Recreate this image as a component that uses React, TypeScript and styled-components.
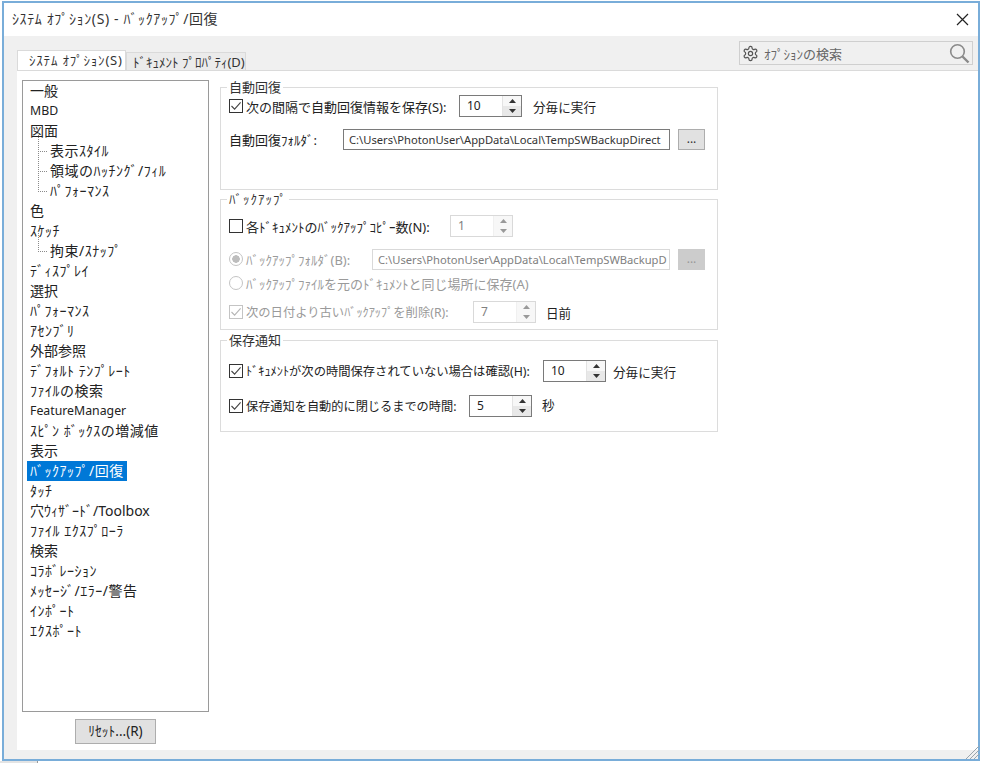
import React from "react";
import styled, { createGlobalStyle } from "styled-components";

const items: { label: string; child?: boolean; selected?: boolean; latin?: boolean; tight?: boolean }[] = [
  { label: "一般" },
  { label: "MBD", latin: true },
  { label: "図面" },
  { label: "表示ｽﾀｲﾙ", child: true },
  { label: "領域のﾊｯﾁﾝｸﾞ/ﾌｨﾙ", child: true },
  { label: "ﾊﾟﾌｫｰﾏﾝｽ", child: true },
  { label: "色" },
  { label: "ｽｹｯﾁ" },
  { label: "拘束/ｽﾅｯﾌﾟ", child: true },
  { label: "ﾃﾞｨｽﾌﾟﾚｲ" },
  { label: "選択" },
  { label: "ﾊﾟﾌｫｰﾏﾝｽ" },
  { label: "ｱｾﾝﾌﾞﾘ" },
  { label: "外部参照" },
  { label: "ﾃﾞﾌｫﾙﾄ ﾃﾝﾌﾟﾚｰﾄ" },
  { label: "ﾌｧｲﾙの検索" },
  { label: "FeatureManager", latin: true },
  { label: "ｽﾋﾟﾝ ﾎﾞｯｸｽの増減値" },
  { label: "表示" },
  { label: "ﾊﾞｯｸｱｯﾌﾟ/回復", selected: true },
  { label: "ﾀｯﾁ" },
  { label: "穴ｳｨｻﾞｰﾄﾞ/Toolbox", tight: true },
  { label: "ﾌｧｲﾙ ｴｸｽﾌﾟﾛｰﾗ" },
  { label: "検索" },
  { label: "ｺﾗﾎﾞﾚｰｼｮﾝ" },
  { label: "ﾒｯｾｰｼﾞ/ｴﾗｰ/警告" },
  { label: "ｲﾝﾎﾟｰﾄ" },
  { label: "ｴｸｽﾎﾟｰﾄ" },
];

const hasKana = (text: string) => /[\uff61-\uff9f]/.test(text);

const Check = ({ checked, disabled }: { checked?: boolean; disabled?: boolean }) => (
  <CheckBox $disabled={disabled}>
    {checked && (
      <svg width="12" height="12" viewBox="0 0 12 12">
        <path d="M1.5 6 L4.6 9.2 L10.6 2.4" fill="none" stroke={disabled ? "#b5b5b5" : "#444"} strokeWidth="1.1" />
      </svg>
    )}
  </CheckBox>
);

const Spin = ({ value, disabled }: { value: string; disabled?: boolean }) => (
  <SpinBox $disabled={disabled}>
    <SpinValue>{value}</SpinValue>
    <SpinArrows $disabled={disabled}>
      <SpinStep $disabled={disabled}>
        <svg width="7" height="4" viewBox="0 0 7 4">
          <path d="M3.5 0 L7 4 L0 4 Z" fill={disabled ? "#999" : "#333"} />
        </svg>
      </SpinStep>
      <SpinStep $disabled={disabled} $down>
        <svg width="7" height="4" viewBox="0 0 7 4">
          <path d="M0 0 L7 0 L3.5 4 Z" fill={disabled ? "#999" : "#333"} />
        </svg>
      </SpinStep>
    </SpinArrows>
  </SpinBox>
);

export default function App() {
  return (
    <>
      <GlobalStyle />
      <Window>
        <TitleBar>
          <Title>ｼｽﾃﾑ ｵﾌﾟｼｮﾝ(S) - ﾊﾞｯｸｱｯﾌﾟ/回復</Title>
          <svg width="13" height="13" viewBox="0 0 13 13">
            <path d="M1 1 L12 12 M12 1 L1 12" stroke="#222" strokeWidth="1.2" />
          </svg>
        </TitleBar>
        <Body>
          <TabBar>
            <Tabs>
              <Tab $active>ｼｽﾃﾑ ｵﾌﾟｼｮﾝ(S)</Tab>
              <Tab>ﾄﾞｷｭﾒﾝﾄ ﾌﾟﾛﾊﾟﾃｨ(D)</Tab>
            </Tabs>
            <SearchBox>
              <svg width="17" height="17" viewBox="0 0 24 24" fill="none" stroke="#555" strokeWidth="1.7">
                <path d="M12.22 2h-.44a2 2 0 0 0-2 2v.18a2 2 0 0 1-1 1.73l-.43.25a2 2 0 0 1-2 0l-.15-.08a2 2 0 0 0-2.73.73l-.22.38a2 2 0 0 0 .73 2.73l.15.1a2 2 0 0 1 1 1.72v.51a2 2 0 0 1-1 1.74l-.15.09a2 2 0 0 0-.73 2.73l.22.38a2 2 0 0 0 2.73.73l.15-.08a2 2 0 0 1 2 0l.43.25a2 2 0 0 1 1 1.73V20a2 2 0 0 0 2 2h.44a2 2 0 0 0 2-2v-.18a2 2 0 0 1 1-1.73l.43-.25a2 2 0 0 1 2 0l.15.08a2 2 0 0 0 2.73-.73l.22-.39a2 2 0 0 0-.73-2.73l-.15-.08a2 2 0 0 1-1-1.74v-.5a2 2 0 0 1 1-1.74l.15-.09a2 2 0 0 0 .73-2.73l-.22-.38a2 2 0 0 0-2.73-.73l-.15.08a2 2 0 0 1-2 0l-.43-.25a2 2 0 0 1-1-1.73V4a2 2 0 0 0-2-2z" />
                <circle cx="12" cy="12" r="3" />
              </svg>
              <SearchText>ｵﾌﾟｼｮﾝの検索</SearchText>
              <svg width="21" height="21" viewBox="0 0 21 21" fill="none" stroke="#8a8a8a">
                <circle cx="8.5" cy="8.5" r="6.8" strokeWidth="1.6" />
                <path d="M13.5 13.5 L19.5 19.5" strokeWidth="2.4" />
              </svg>
            </SearchBox>
          </TabBar>
          <Panel>
            <ListColumn>
              <List>
                {items.map((item, i) => (
                  <ListRow key={i} $child={item.child}>
                    <ListLabel
                      $selected={item.selected}
                      $latin={item.latin}
                      $kana={hasKana(item.label) && !item.tight}
                    >
                      {item.label}
                    </ListLabel>
                  </ListRow>
                ))}
              </List>
              <ResetButton>ﾘｾｯﾄ...(R)</ResetButton>
            </ListColumn>
            <Options>
              <Group $height={110} $pad={1}>
                <Legend>自動回復</Legend>
                <Row>
                  <Check checked />
                  <RowLabel $width={213}>次の間隔で自動回復情報を保存(S):</RowLabel>
                  <Spin value="10" />
                  <Unit>分毎に実行</Unit>
                </Row>
                <Row $gap={11}>
                  <RowLabel $width={114} $flush>自動回復ﾌｫﾙﾀﾞ:</RowLabel>
                  <PathField>C:\Users\PhotonUser\AppData\Local\TempSWBackupDirect</PathField>
                  <BrowseButton>...</BrowseButton>
                </Row>
              </Group>
              <Group $height={138} $pad={9} $top={2}>
                <Legend $kana>ﾊﾞｯｸｱｯﾌﾟ</Legend>
                <Row>
                  <Check />
                  <RowLabel $width={204}>各ﾄﾞｷｭﾒﾝﾄのﾊﾞｯｸｱｯﾌﾟｺﾋﾟｰ数(N):</RowLabel>
                  <Spin value="1" disabled />
                </Row>
                <Row $gap={11}>
                  <Radio $on />
                  <RowLabel $width={126} $muted>ﾊﾞｯｸｱｯﾌﾟﾌｫﾙﾀﾞ(B):</RowLabel>
                  <PathField $disabled>C:\Users\PhotonUser\AppData\Local\TempSWBackupD</PathField>
                  <BrowseButton $disabled>...</BrowseButton>
                </Row>
                <Row $gap={2}>
                  <Radio />
                  <RowLabel $muted>ﾊﾞｯｸｱｯﾌﾟﾌｧｲﾙを元のﾄﾞｷｭﾒﾝﾄと同じ場所に保存(A)</RowLabel>
                </Row>
                <Row $gap={7}>
                  <Check checked disabled />
                  <RowLabel $width={227} $muted $size={12.3}>次の日付より古いﾊﾞｯｸｱｯﾌﾟを削除(R):</RowLabel>
                  <Spin value="7" disabled />
                  <Unit $left={10}>日前</Unit>
                </Row>
              </Group>
              <Group $height={99} $pad={13} $top={3}>
                <Legend>保存通知</Legend>
                <Row>
                  <Check checked />
                  <RowLabel $width={297} $size={12.3}>ﾄﾞｷｭﾒﾝﾄが次の時間保存されていない場合は確認(H):</RowLabel>
                  <Spin value="10" />
                  <Unit $left={7}>分毎に実行</Unit>
                </Row>
                <Row $gap={13}>
                  <Check checked />
                  <RowLabel $width={223} $size={12.2}>保存通知を自動的に閉じるまでの時間:</RowLabel>
                  <Spin value="5" />
                  <Unit $left={10} $raise={4}>秒</Unit>
                </Row>
              </Group>
            </Options>
          </Panel>
        </Body>
        <Grip width="14" height="14" viewBox="0 0 14 14">
          <path d="M14 1 L1 14 M14 5 L5 14 M14 9 L9 14" stroke="#9aa5ad" strokeWidth="1" />
        </Grip>
      </Window>
      <BehindTab />
    </>
  );
}

const GlobalStyle = createGlobalStyle`
  html, body {
    margin: 0;
    padding: 0;
    width: 983px;
    height: 763px;
    overflow: hidden;
    background: #fff;
    color: #222;
    font-family: "Noto Sans", "Noto Sans CJK JP", sans-serif;
    font-size: 13px;
  }
`;

const Window = styled.div`
  position: relative;
  box-sizing: border-box;
  width: 978px;
  height: 760px;
  margin: 1px 0 0 2px;
  border: 2px solid #79add9;
  display: flex;
  flex-direction: column;
  background: #f0f0f0;
`;

const BehindTab = styled.div`
  position: absolute;
  left: 0;
  top: 761px;
  width: 37px;
  height: 2px;
  background: #e4e4e4;
  border-right: 1px solid #9a9a9a;
`;

const TitleBar = styled.div`
  height: 33px;
  flex: none;
  background: #fff;
  display: flex;
  align-items: center;
  justify-content: space-between;
  padding: 0 9px 0 8px;
`;

const Title = styled.div`
  margin-bottom: 3px;
  font-size: 14px;
  letter-spacing: 0.62px;
  color: #333;
`;

const Body = styled.div`
  flex: 1;
  min-height: 0;
  display: flex;
  flex-direction: column;
  padding: 0 0 9px 13px;
`;

const TabBar = styled.div`
  height: 34px;
  flex: none;
  display: flex;
  align-items: flex-end;
  justify-content: space-between;
  padding-right: 5px;
`;

const Tabs = styled.div`
  display: flex;
  align-items: flex-end;
`;

const Tab = styled.div<{ $active?: boolean }>`
  height: ${(p) => (p.$active ? 20 : 18)}px;
  width: ${(p) => (p.$active ? 109 : 120)}px;
  box-sizing: border-box;
  background: ${(p) => (p.$active ? "#fff" : "#ebebeb")};
  border: 1px solid #dadada;
  border-bottom: none;
  padding-left: ${(p) => (p.$active ? 11 : 6)}px;
  font-size: 13px;
  letter-spacing: ${(p) => (p.$active ? 0.8 : 0)}px;
  line-height: 18px;
  color: #333;
  white-space: nowrap;
  overflow: hidden;
`;

const SearchBox = styled.div`
  box-sizing: border-box;
  width: 234px;
  height: 24px;
  margin-bottom: 5px;
  border: 1px solid #cfcfcf;
  background: #f0f0f0;
  display: flex;
  align-items: center;
  padding: 0 2px;
`;

const SearchText = styled.span`
  flex: 1;
  margin-left: 5px;
  font-size: 13px;
  color: #666;
`;

const Panel = styled.div`
  flex: 1;
  min-height: 0;
  background: #fff;
  border-top: 1px solid #dadada;
  display: flex;
  gap: 11px;
  padding: 9px 0 0 5px;
`;

const ListColumn = styled.div`
  width: 187px;
  flex: none;
  display: flex;
  flex-direction: column;
  align-items: center;
`;

const List = styled.div`
  box-sizing: border-box;
  width: 100%;
  height: 632px;
  border: 1px solid #9a9a9a;
  background: #fff;
`;

const ListRow = styled.div<{ $child?: boolean }>`
  position: relative;
  height: 20px;
  margin-left: ${(p) => (p.$child ? 24 : 4)}px;
  ${(p) =>
    p.$child &&
    `
    &::before {
      content: "";
      position: absolute;
      left: -9px;
      top: -10px;
      width: 8px;
      height: 20px;
      border-left: 1px dotted #8a8a8a;
      border-bottom: 1px dotted #8a8a8a;
    }
  `}
`;

const ListLabel = styled.span<{ $selected?: boolean; $latin?: boolean; $kana?: boolean }>`
  display: inline-block;
  height: 20px;
  line-height: 20px;
  padding: 0 3px;
  font-size: ${(p) => (p.$latin ? 12.3 : 14)}px;
  letter-spacing: ${(p) => (p.$kana ? 0.5 : 0)}px;
  white-space: nowrap;
  color: ${(p) => (p.$selected ? "#fff" : "#222")};
  background: ${(p) => (p.$selected ? "#0078d7" : "transparent")};
`;

const ResetButton = styled.div`
  box-sizing: border-box;
  width: 81px;
  height: 25px;
  margin-top: 7px;
  background: #e1e1e1;
  border: 1px solid #adadad;
  font-size: 13.5px;
  line-height: 23px;
  text-align: center;
`;

const Options = styled.div`
  width: 498px;
  flex: none;
  display: flex;
  flex-direction: column;
`;

const Group = styled.fieldset<{ $height: number; $pad: number; $top?: number }>`
  box-sizing: border-box;
  height: ${(p) => p.$height}px;
  margin: ${(p) => p.$top ?? 0}px 0 0;
  padding: ${(p) => p.$pad}px 8px 0;
  border: 1px solid #dcdcdc;
  min-width: 0;
`;

const Legend = styled.legend<{ $kana?: boolean }>`
  height: 14px;
  line-height: 14px;
  margin-left: -2px;
  padding: 0 2px;
  font-size: 13px;
  letter-spacing: ${(p) => (p.$kana ? 1 : 0)}px;
  color: #333;
`;

const Row = styled.div<{ $gap?: number }>`
  display: flex;
  align-items: center;
  height: 22px;
  margin-top: ${(p) => p.$gap ?? 0}px;
`;

const CheckBox = styled.span<{ $disabled?: boolean }>`
  box-sizing: border-box;
  width: 14px;
  height: 14px;
  flex: none;
  display: inline-flex;
  border: 1px solid ${(p) => (p.$disabled ? "#c4c4c4" : "#333")};
  background: #fff;
`;

const Radio = styled.span<{ $on?: boolean }>`
  box-sizing: border-box;
  width: 14px;
  height: 14px;
  flex: none;
  border-radius: 50%;
  border: 1px solid #c4c4c4;
  background: ${(p) => (p.$on ? "radial-gradient(circle, #bdbdbd 0 3.5px, #fff 4px)" : "#fff")};
`;

const RowLabel = styled.span<{ $width?: number; $muted?: boolean; $flush?: boolean; $size?: number }>`
  ${(p) => p.$width && `width: ${p.$width}px;`}
  flex: none;
  margin-left: ${(p) => (p.$flush ? 0 : 3)}px;
  font-size: ${(p) => p.$size ?? 13}px;
  white-space: nowrap;
  color: ${(p) => (p.$muted ? "#9a9a9a" : "#222")};
`;

const SpinBox = styled.div<{ $disabled?: boolean }>`
  box-sizing: border-box;
  width: 63px;
  height: 22px;
  flex: none;
  display: flex;
  border: 1px solid ${(p) => (p.$disabled ? "#d9d9d9" : "#7a7a7a")};
  background: #fff;
  color: ${(p) => (p.$disabled ? "#808080" : "#222")};
`;

const SpinValue = styled.span`
  flex: 1;
  padding-left: 7px;
  font-size: 12px;
  line-height: 20px;
`;

const SpinArrows = styled.div<{ $disabled?: boolean }>`
  width: 18px;
  display: flex;
  flex-direction: column;
  border-left: 1px solid ${(p) => (p.$disabled ? "#f0f0f0" : "#e3e3e3")};
`;

const SpinStep = styled.div<{ $disabled?: boolean; $down?: boolean }>`
  flex: 1;
  display: flex;
  align-items: center;
  justify-content: center;
  background: ${(p) => (p.$disabled ? "#f7f7f7" : p.$down ? "#e8e8e8" : "#f7f7f7")};
`;

const Unit = styled.span<{ $left?: number; $raise?: number }>`
  margin-left: ${(p) => p.$left ?? 11}px;
  margin-bottom: ${(p) => p.$raise ?? 0}px;
  font-size: 12.6px;
  white-space: nowrap;
`;

const PathField = styled.div<{ $disabled?: boolean }>`
  box-sizing: border-box;
  flex: 1;
  min-width: 0;
  height: 21px;
  padding-left: 5px;
  border: 1px solid ${(p) => (p.$disabled ? "#d9d9d9" : "#7a7a7a")};
  font-size: 11.2px;
  line-height: 19px;
  white-space: nowrap;
  overflow: hidden;
  color: ${(p) => (p.$disabled ? "#808080" : "#333")};
`;

const BrowseButton = styled.div<{ $disabled?: boolean }>`
  box-sizing: border-box;
  width: 27px;
  height: 21px;
  flex: none;
  margin: 0 4px 0 8px;
  background: ${(p) => (p.$disabled ? "#cccccc" : "#e1e1e1")};
  border: 1px solid ${(p) => (p.$disabled ? "#cccccc" : "#adadad")};
  color: ${(p) => (p.$disabled ? "#999" : "#333")};
  font-size: 12px;
  line-height: 18px;
  text-align: center;
`;

const Grip = styled.svg`
  position: absolute;
  right: -1px;
  bottom: 0;
`;
